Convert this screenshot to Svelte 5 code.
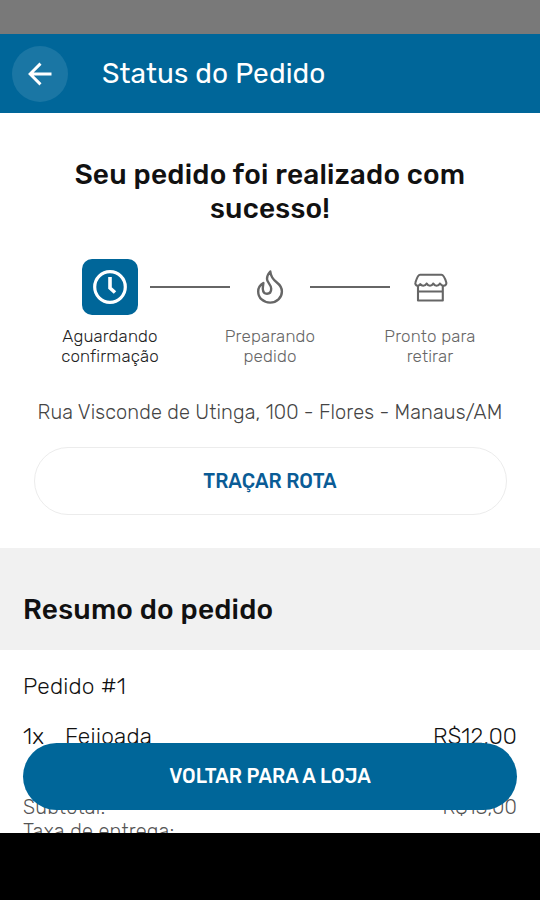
<script>
    const steps = [
        { icon: 'clock', lines: ['Aguardando', 'confirmação'], active: true },
        { icon: 'flame', lines: ['Preparando', 'pedido'], active: false },
        { icon: 'store', lines: ['Pronto para', 'retirar'], active: false },
    ]

    const items = [{ qty: 1, name: 'Feijoada', price: 'R$12,00' }]

    const totals = [
        { label: 'Subtotal:', value: 'R$13,00' },
        { label: 'Taxa de entrega:', value: '' },
    ]
</script>

<div class="screen">
    <div class="status-bar"></div>

    <header class="app-bar">
        <button class="back" aria-label="Voltar">
            <svg width="26" height="26" viewBox="0 0 26 26" fill="none" stroke="#fff" stroke-width="2.9">
                <path d="M24.500 13H3M13.500 2.600L3.100 13l10.400 10.400" />
            </svg>
        </button>
        <span class="app-title">Status do Pedido</span>
    </header>

    <main class="content">
        <section class="progress">
            <h1>Seu pedido foi realizado com<br /><span>sucesso!</span></h1>

            <div class="steps">
                {#each steps as step, i (step.icon)}
                    <div class="step" class:active={step.active}>
                        <div class="track">
                            <span class="line" class:hidden={i === 0}></span>
                            <div class="step-icon">
                                {#if step.icon === 'clock'}
                                    <svg width="36" height="36" viewBox="0 0 36 36" fill="none" stroke="#fff" stroke-width="3.2">
                                        <circle cx="18" cy="18" r="15.3" />
                                        <path d="M18 8v11l5 4.5" stroke-width="3.6" />
                                    </svg>
                                {:else if step.icon === 'flame'}
                                    <svg width="28" height="36" viewBox="0 0 28 36" fill="none" stroke="#666" stroke-width="2.4" stroke-linejoin="round">
                                        <path d="M14.300 2.500C12.500 4.500 11 7 11 10c0 3.700 4.200 5.300 4.200 9.800 0 3.200-1.800 5-4.200 5-2.600 0-4-2-4.200-4.800C6.700 18 7.200 16 7.400 14 4.200 15.800 2.200 18.800 2.200 22.400c0 6.500 5.200 11.200 11.900 11.200S25.900 28.800 25.900 22.400c0-4.500-2.300-6.900-5.300-9.200C16.800 10.300 14.800 7.800 14.300 2.500z" />
                                    </svg>
                                {:else}
                                    <svg width="36" height="30" viewBox="0 0 36 30" fill="none" stroke="#666" stroke-width="2.1" stroke-linejoin="round">
                                        <path d="M8 2.700h21.500c2 0 3.800 4.500 4.800 7.800.4 1.800-.9 3.200-2.600 3.200-1.600 0-2.900-.8-3.700-2.200-.8 1.400-1.900 2.200-3.400 2.200s-2.600-.8-3.300-2.200c-.8 1.400-1.800 2.200-3.300 2.200s-2.600-.8-3.300-2.200c-.8 1.400-1.900 2.200-3.500 2.200-1.300 0-2.200-.5-2.900-1.500-.7 1-1.500 1.500-2.500 1.500-1.900 0-2.900-1.600-2.300-3.400C4.500 7 6 2.700 8 2.700z" />
                                        <path d="M6 13.500v15h24.800v-15M6 19.500h24.800" />
                                    </svg>
                                {/if}
                            </div>
                            <span class="line" class:hidden={i === steps.length - 1}></span>
                        </div>
                        <div class="step-label">
                            {#each step.lines as line}
                                <span>{line}</span>
                            {/each}
                        </div>
                    </div>
                {/each}
            </div>

            <p class="address">Rua Visconde de Utinga, 100 - Flores - Manaus/AM</p>
            <button class="route">TRAÇAR ROTA</button>
        </section>

        <h2>Resumo do pedido</h2>

        <section class="order">
            <div class="order-id">Pedido #1</div>
            {#each items as item}
                <div class="item">
                    <span class="qty">{item.qty}x</span>
                    <span class="name">{item.name}</span>
                    <span class="price">{item.price}</span>
                </div>
            {/each}
            <div class="totals">
                {#each totals as total}
                    <div class="total">
                        <span>{total.label}</span>
                        <span>{total.value}</span>
                    </div>
                {/each}
            </div>
        </section>

        <button class="back-to-store">VOLTAR PARA A LOJA</button>
    </main>

    <div class="nav-bar"></div>
</div>

<style>
    :global(body) {
        background: #000;
    }

    .screen {
        display: flex;
        flex-direction: column;
        width: 540px;
        height: 900px;
        overflow: hidden;
        background: #fff;
        color: #111;
        font-family: Rubik, Roboto, sans-serif;
    }

    button {
        border: 0;
        padding: 0;
        font-family: inherit;
    }

    .status-bar {
        flex: none;
        height: 34px;
        background: #797979;
    }

    .app-bar {
        display: flex;
        flex: none;
        align-items: center;
        box-sizing: border-box;
        height: 79px;
        padding: 0 12px;
        gap: 34px;
        background: #006699;
    }

    .back {
        display: grid;
        place-items: center;
        width: 56px;
        height: 56px;
        border-radius: 50%;
        background: #1a76a4;
    }

    .app-title {
        color: #fff;
        font-size: 28px;
        letter-spacing: 0.1px;
    }

    .content {
        position: relative;
        flex: none;
        height: 720px;
        overflow: hidden;
    }

    .progress {
        box-sizing: border-box;
        height: 435px;
        padding-top: 45px;
        text-align: center;
    }

    h1 {
        margin: 0 0 34px;
        font-size: 28px;
        font-weight: 500;
        line-height: 33.5px;
        letter-spacing: 0.22px;
    }

    .steps {
        display: flex;
        padding: 0 30px;
    }

    .step {
        width: 160px;
        color: #666;
    }

    .track {
        display: flex;
        align-items: center;
        gap: 12px;
    }

    .line {
        flex: 1;
        height: 2px;
        background: #666;
    }

    .line.hidden {
        visibility: hidden;
    }

    .step-icon {
        display: grid;
        place-items: center;
        width: 56px;
        height: 56px;
        border-radius: 10px;
    }

    .active {
        color: #222;
    }

    .active .step-icon {
        background: #006699;
    }

    .step-label {
        display: flex;
        flex-direction: column;
        margin-top: 12px;
        font-size: 17px;
        font-weight: 300;
        line-height: 19.5px;
        letter-spacing: 0.15px;
    }

    .address {
        margin: 34px 0 23px;
        color: #444;
        font-size: 20px;
        font-weight: 300;
        line-height: 24px;
        letter-spacing: 0.11px;
    }

    .route {
        width: 473px;
        height: 68px;
        border: 1px solid #ececec;
        border-radius: 34px;
        background: #fff;
        color: #0a5c96;
        font-size: 19.6px;
        font-weight: 500;
    }

    h2 {
        box-sizing: border-box;
        height: 102px;
        margin: 0;
        padding: 45px 23px 0;
        background: #f1f1f1;
        font-size: 28px;
        font-weight: 500;
        line-height: 34px;
        letter-spacing: 0.2px;
    }

    .order {
        padding: 23px 23px;
        font-size: 22.7px;
        font-weight: 300;
        line-height: 28px;
        letter-spacing: 0.2px;
    }

    .item {
        display: flex;
        margin-top: 22px;
    }

    .qty {
        width: 42px;
    }

    .name {
        flex: 1;
    }

    .totals {
        margin-top: 44px;
        color: #555;
        font-size: 20px;
        line-height: 24px;
    }

    .total {
        display: flex;
        justify-content: space-between;
    }

    .back-to-store {
        position: absolute;
        left: 23px;
        right: 23px;
        bottom: 23px;
        height: 67px;
        border-radius: 34px;
        background: #006699;
        color: #fff;
        font-size: 19.6px;
        font-weight: 500;
    }

    .nav-bar {
        flex: 1;
        background: #000;
    }
</style>
